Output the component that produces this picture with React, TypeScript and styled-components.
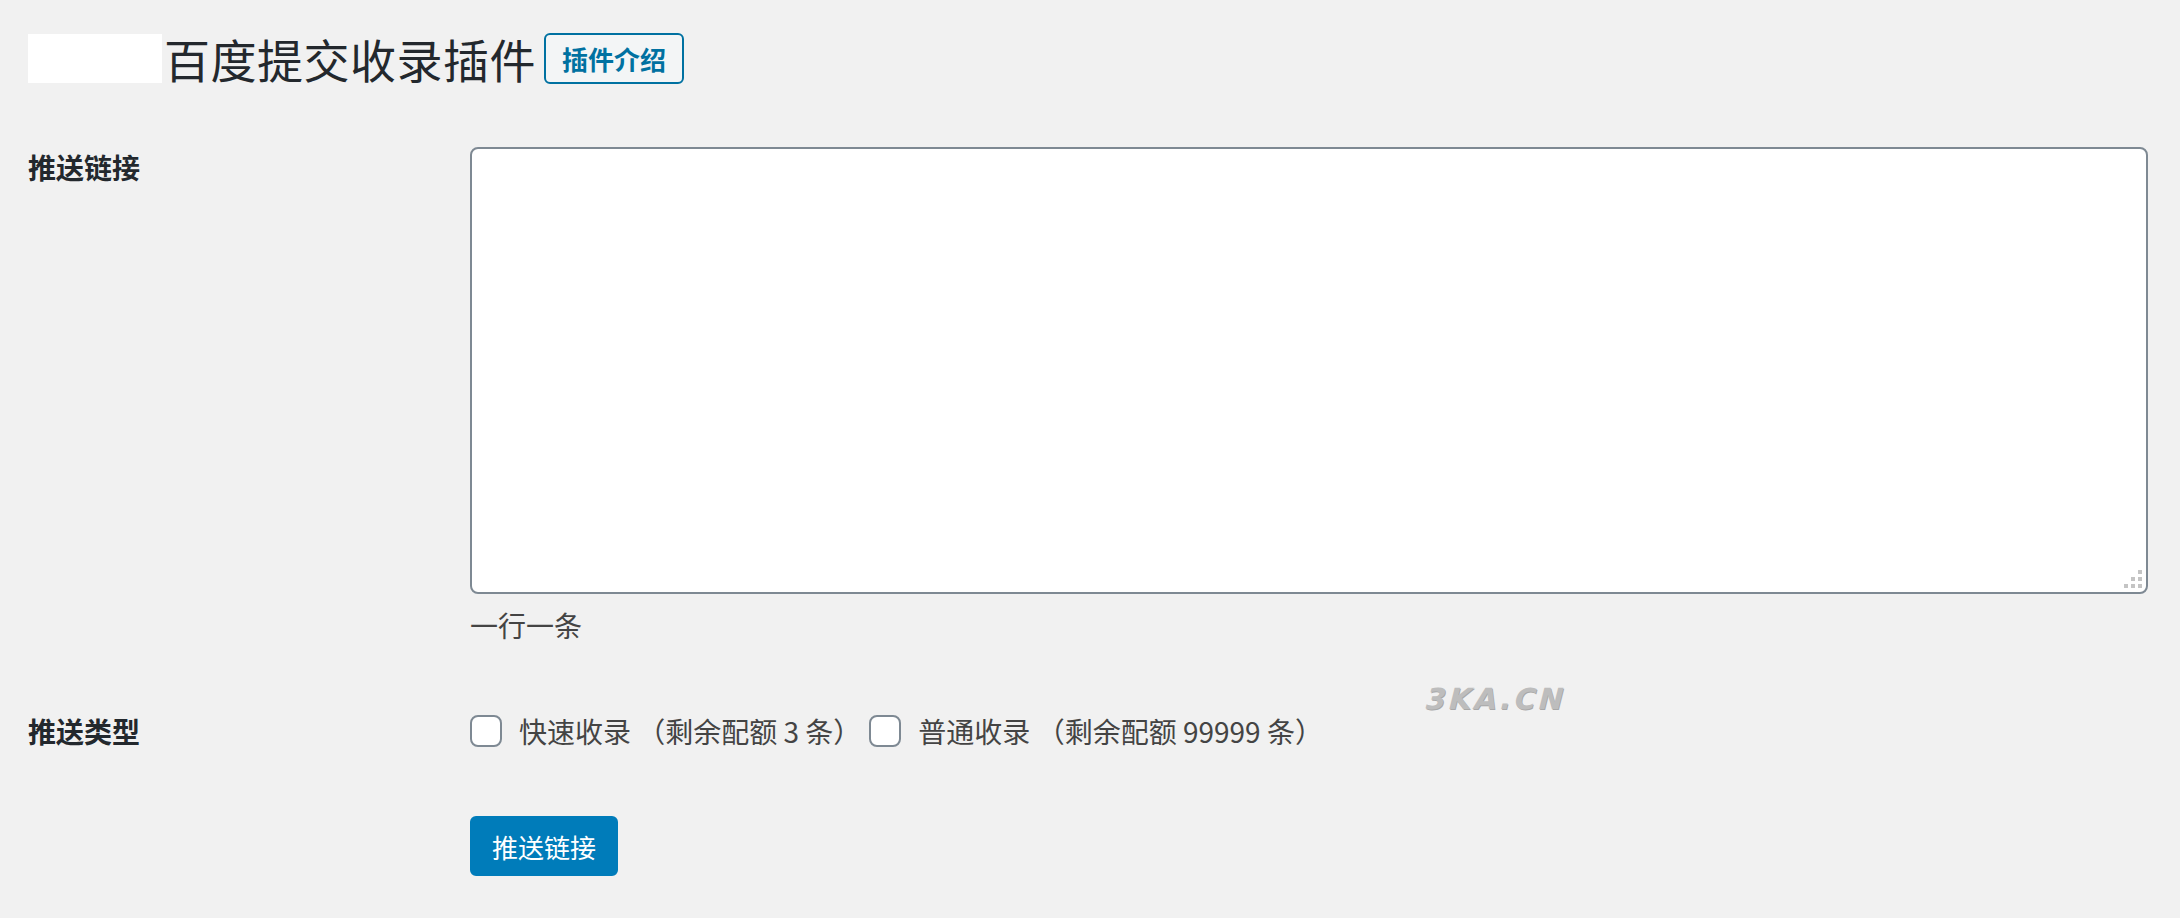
import React from "react";
import styled, { createGlobalStyle } from "styled-components";

const GlobalStyle = createGlobalStyle`
  html, body {
    margin: 0;
    padding: 0;
    background: #f1f1f1;
  }
  body {
    font-family: "Noto Sans CJK SC", "Noto Sans", sans-serif;
    color: #444;
  }
`;

const Wrap = styled.div`
  position: relative;
  min-height: 918px;
  padding: 28px 32px 0 28px;
  box-sizing: border-box;
`;

const TitleBar = styled.div`
  display: flex;
  align-items: center;
  height: 60px;
`;

const Redacted = styled.span`
  display: inline-block;
  width: 134px;
  height: 49px;
  margin-right: 2px;
  background: #fff;
`;

const Title = styled.h1`
  margin: 0;
  font-size: 46px;
  font-weight: 400;
  line-height: 60px;
  letter-spacing: 0.5px;
  color: #23282d;
`;

const TitleAction = styled.a`
  display: inline-flex;
  align-items: center;
  margin-left: 8px;
  height: 51px;
  padding: 0 16px;
  box-sizing: border-box;
  border: 2px solid #0071a1;
  border-radius: 6px;
  background: #f3f5f6;
  color: #0071a1;
  font-size: 26px;
  font-weight: 700;
  text-decoration: none;
  cursor: pointer;
`;

const FieldRow = styled.div<{ $top: number }>`
  display: grid;
  grid-template-columns: 442px 1fr;
  align-items: start;
  margin-top: ${({ $top }) => $top}px;
`;

const FieldLabel = styled.label<{ $pad?: number }>`
  padding-top: ${({ $pad = 0 }) => $pad}px;
  font-size: 28px;
  line-height: 36px;
  font-weight: 700;
  color: #23282d;
`;

const AreaBox = styled.div`
  position: relative;
`;

const LinksArea = styled.textarea`
  display: block;
  width: 100%;
  height: 447px;
  box-sizing: border-box;
  border: 2px solid #7e8993;
  border-radius: 8px;
  background: #fff;
  resize: none;
  padding: 4px 16px;
  font-family: inherit;
  font-size: 28px;
  outline: none;
`;

const Grip = styled.svg`
  position: absolute;
  right: 6px;
  bottom: 6px;
`;

const Description = styled.p`
  margin: 13px 0 0;
  font-size: 28px;
  line-height: 36px;
  color: #444;
`;

const OptionList = styled.div`
  display: flex;
  align-items: center;
  height: 36px;
`;

const Option = styled.label`
  display: inline-flex;
  align-items: center;
  margin-right: 8px;
  font-size: 28px;
  line-height: 36px;
  color: #444;
  white-space: pre;
`;

const Check = styled.input`
  appearance: none;
  width: 32px;
  height: 32px;
  margin: 0 17px 0 0;
  border: 2px solid #7e8993;
  border-radius: 8px;
  background: #fff;
  box-sizing: border-box;
`;

const SubmitButton = styled.button`
  height: 60px;
  padding: 0 20px;
  border: 2px solid #007cba;
  border-radius: 6px;
  background: #007cba;
  color: #fff;
  font-family: inherit;
  font-size: 26px;
  cursor: pointer;
`;

const Watermark = styled.span`
  position: absolute;
  left: 1426px;
  top: 682px;
  display: inline-block;
  transform: skewX(-14deg);
  font-family: "DejaVu Sans", "Liberation Sans", sans-serif;
  font-size: 29px;
  font-weight: 700;
  letter-spacing: 3px;
  color: #bdbdbd;
  text-shadow: 1px 1px 0 #a8a8a8;
  pointer-events: none;
`;

const gripDots = [
  [14, 0],
  [7, 7],
  [14, 7],
  [0, 14],
  [7, 14],
  [14, 14],
];

const App: React.FC = () => {
  return (
    <>
      <GlobalStyle />
      <Wrap>
        <TitleBar>
          <Redacted />
          <Title>百度提交收录插件</Title>
          <TitleAction>插件介绍</TitleAction>
        </TitleBar>

        <FieldRow $top={59}>
          <FieldLabel $pad={2}>推送链接</FieldLabel>
          <div>
            <AreaBox>
              <LinksArea />
              <Grip width="18" height="18" viewBox="0 0 18 18">
                {gripDots.map(([x, y]) => (
                  <rect key={`${x}-${y}`} x={x} y={y} width="4" height="4" fill="#c4c4c4" />
                ))}
              </Grip>
            </AreaBox>
            <Description>一行一条</Description>
          </div>
        </FieldRow>

        <FieldRow $top={70}>
          <FieldLabel>推送类型</FieldLabel>
          <OptionList>
            <Option>
              <Check type="checkbox" />
              快速收录 （剩余配额 3 条）
            </Option>
            <Option>
              <Check type="checkbox" />
              普通收录 （剩余配额 99999 条）
            </Option>
          </OptionList>
        </FieldRow>

        <FieldRow $top={67}>
          <span />
          <div>
            <SubmitButton type="button">推送链接</SubmitButton>
          </div>
        </FieldRow>

        <Watermark>3KA.CN</Watermark>
      </Wrap>
    </>
  );
};

export default App;
